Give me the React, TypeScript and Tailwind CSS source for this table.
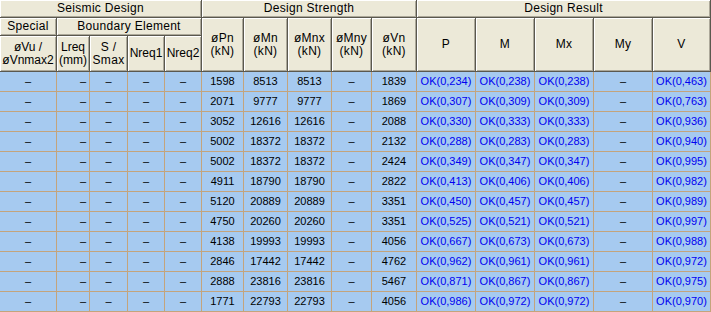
import React from "react";

const rows: string[][] = [
  ["1598", "8513", "8513", "1839", "0,234", "0,238", "0,238", "0,463"],
  ["2071", "9777", "9777", "1869", "0,307", "0,309", "0,309", "0,763"],
  ["3052", "12616", "12616", "2088", "0,330", "0,333", "0,333", "0,936"],
  ["5002", "18372", "18372", "2132", "0,288", "0,283", "0,283", "0,940"],
  ["5002", "18372", "18372", "2424", "0,349", "0,347", "0,347", "0,995"],
  ["4911", "18790", "18790", "2822", "0,413", "0,406", "0,406", "0,982"],
  ["5120", "20889", "20889", "3351", "0,450", "0,457", "0,457", "0,989"],
  ["4750", "20260", "20260", "3351", "0,525", "0,521", "0,521", "0,997"],
  ["4138", "19993", "19993", "4056", "0,667", "0,673", "0,673", "0,988"],
  ["2846", "17442", "17442", "4762", "0,962", "0,961", "0,961", "0,972"],
  ["2888", "23816", "23816", "5467", "0,871", "0,867", "0,867", "0,975"],
  ["1771", "22793", "22793", "4056", "0,986", "0,972", "0,972", "0,970"],
];

const hd =
  "flex flex-col items-center justify-center text-center bg-[#ece9d8] border-r border-b border-[#5a584e] shadow-[inset_1px_1px_0_#fff,inset_-1px_-1px_0_#aca899] leading-[13px] text-[12px] tracking-[0.3px] text-black";

const cell =
  "flex items-center justify-center bg-[#a6caf0] border-r border-b border-[#c4a47c] text-[11px] leading-none text-black";

function Head({ className = "", children }: { className?: string; children: React.ReactNode }) {
  return <div className={`${hd} ${className}`}>{children}</div>;
}

export default function App() {
  return (
    <div className="w-[711px] h-[312px] overflow-hidden bg-white font-['Liberation_Sans',Arial,sans-serif]">
      <div className="grid grid-cols-[57px_33px_38px_37px_37px_42px_44px_44px_40px_45px_59px_59px_59px_59px_58px] grid-rows-[18px_18px_36px_repeat(12,20px)]">
        {/* group titles */}
        <Head className="col-span-5">Seismic Design</Head>
        <Head className="col-span-5">Design Strength</Head>
        <Head className="col-span-5">Design Result</Head>

        {/* second row */}
        <Head>Special</Head>
        <Head className="col-span-4">Boundary Element</Head>
        {["øPn", "øMn", "øMnx", "øMny", "øVn"].map((h) => (
          <Head key={h} className="row-span-2">
            <span>{h}</span>
            <span>(kN)</span>
          </Head>
        ))}
        {["P", "M", "Mx", "My", "V"].map((h) => (
          <Head key={h} className="row-span-2">
            {h}
          </Head>
        ))}

        {/* third row */}
        <Head className="!tracking-normal">
          <span>øVu /</span>
          <span>øVnmax2</span>
        </Head>
        <Head className="!tracking-normal">
          <span>Lreq</span>
          <span>(mm)</span>
        </Head>
        <Head>
          <span>S /</span>
          <span>Smax</span>
        </Head>
        <Head className="!tracking-normal">Nreq1</Head>
        <Head className="!tracking-normal">Nreq2</Head>

        {/* data */}
        {rows.map((r, i) => (
          <React.Fragment key={i}>
            <div className={cell}>–</div>
            <div className={`${cell} !justify-end pr-[3px]`}>–</div>
            <div className={cell}>–</div>
            <div className={cell}>–</div>
            <div className={cell}>–</div>
            <div className={cell}>{r[0]}</div>
            <div className={cell}>{r[1]}</div>
            <div className={cell}>{r[2]}</div>
            <div className={cell}>–</div>
            <div className={cell}>{r[3]}</div>
            <div className={`${cell} !text-[#0000f0]`}>OK({r[4]})</div>
            <div className={`${cell} !text-[#0000f0]`}>OK({r[5]})</div>
            <div className={`${cell} !text-[#0000f0]`}>OK({r[6]})</div>
            <div className={cell}>–</div>
            <div className={`${cell} !text-[#0000f0]`}>OK({r[7]})</div>
          </React.Fragment>
        ))}
      </div>
    </div>
  );
}
